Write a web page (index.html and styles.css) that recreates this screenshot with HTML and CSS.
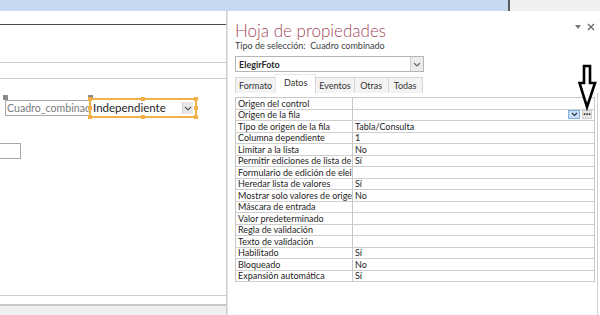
FILE: index.html
```html
<!DOCTYPE html>
<html lang="es">
<head>
<meta charset="utf-8">
<title>Hoja de propiedades</title>
<link rel="stylesheet" href="styles.css">
</head>
<body>
<div class="app">
  <div class="topbar">
    <div class="topbar-blue"></div>
    <div class="topbar-sep"></div>
    <div class="topbar-gray"></div>
  </div>
  <div class="main">
    <div class="left">
      <div class="band band-head"></div>
      <div class="band band-a"></div>
      <div class="band band-b"></div>
      <div class="canvas">
        <div class="handle handle-gray h-g1"></div>
        <div class="handle handle-gray h-g2"></div>
        <div class="ctl-label">Cuadro_combinad</div>
        <div class="ctl-combo">
          <span class="ctl-combo-text">Independiente</span>
          <span class="ctl-combo-btn"><svg width="8" height="5" viewBox="0 0 8 5"><polyline points="1,1 4,4 7,1" fill="none" stroke="#555" stroke-width="1.1"/></svg></span>
          <span class="handle handle-or ho-tl"></span>
          <span class="handle handle-or ho-tm"></span>
          <span class="handle handle-or ho-tr"></span>
          <span class="handle handle-or ho-ml"></span>
          <span class="handle handle-or ho-mr"></span>
          <span class="handle handle-or ho-bl"></span>
          <span class="handle handle-or ho-bm"></span>
          <span class="handle handle-or ho-br"></span>
        </div>
        <div class="ctl-box"></div>
      </div>
      <div class="foot"></div>
    </div>
    <div class="panel">
      <div class="panel-head">
        <div class="title">Hoja de propiedades</div>
        <div class="panel-tools">
          <svg width="6" height="4" viewBox="0 0 6 4"><polygon points="0,0 6,0 3,4" fill="#777"/></svg>
          <svg width="8" height="8" viewBox="0 0 8 8"><path d="M1 1 L7 7 M7 1 L1 7" stroke="#666" stroke-width="1.3"/></svg>
        </div>
      </div>
      <div class="subtitle">Tipo de selección:&nbsp; Cuadro combinado</div>
      <div class="select">
        <span class="select-text">ElegirFoto</span>
        <span class="select-btn"><svg width="8" height="5" viewBox="0 0 8 5"><polyline points="1,1 4,4 7,1" fill="none" stroke="#666" stroke-width="1.1"/></svg></span>
      </div>
      <div class="tabs">
        <div class="tab">Formato</div>
        <div class="tab tab-active">Datos</div>
        <div class="tab">Eventos</div>
        <div class="tab">Otras</div>
        <div class="tab">Todas</div>
      </div>
      <div class="sheet">
        <div class="props">
          <div class="pl">Origen del control</div><div class="pv"></div>
          <div class="pl">Origen de la fila</div><div class="pv pv-tools"><span class="mini-drop"><svg width="7" height="5" viewBox="0 0 7 5"><polyline points="1,1 3.5,3.5 6,1" fill="none" stroke="#234" stroke-width="1.1"/></svg></span><span class="mini-dots">···</span></div>
          <div class="pl">Tipo de origen de la fila</div><div class="pv">Tabla/Consulta</div>
          <div class="pl">Columna dependiente</div><div class="pv">1</div>
          <div class="pl">Limitar a la lista</div><div class="pv">No</div>
          <div class="pl">Permitir ediciones de lista de</div><div class="pv">Sí</div>
          <div class="pl">Formulario de edición de elei</div><div class="pv"></div>
          <div class="pl">Heredar lista de valores</div><div class="pv">Sí</div>
          <div class="pl">Mostrar solo valores de orige</div><div class="pv">No</div>
          <div class="pl">Máscara de entrada</div><div class="pv"></div>
          <div class="pl">Valor predeterminado</div><div class="pv"></div>
          <div class="pl">Regla de validación</div><div class="pv"></div>
          <div class="pl">Texto de validación</div><div class="pv"></div>
          <div class="pl">Habilitado</div><div class="pv">Sí</div>
          <div class="pl">Bloqueado</div><div class="pv">No</div>
          <div class="pl">Expansión automática</div><div class="pv">Sí</div>
        </div>
      </div>
    </div>
  </div>
  <svg class="arrow" width="20" height="50" viewBox="0 0 20 50"><path d="M6 3 H12 V20 H17 L9 44 L1.5 20 H6 Z" fill="#fff" stroke="#000" stroke-width="2.6" stroke-linejoin="miter"/></svg>
</div>
</body>
</html>
```

FILE: styles.css
```css
* { box-sizing: border-box; }
html, body { margin: 0; padding: 0; }
body {
  width: 600px;
  height: 315px;
  overflow: hidden;
  background: #fff;
  font-family: Lato, "Open Sans", sans-serif;
  color: #222;
}
.app { position: relative; width: 600px; height: 315px; display: flex; flex-direction: column; }

.topbar { height: 11px; display: flex; }
.topbar-blue { flex: 1; background: #c6d9f0; }
.topbar-sep { width: 2px; background: #5a5a5a; }
.topbar-gray { width: 90px; background: #efefef; }

.main { flex: 1; display: flex; min-height: 0; }

/* left design pane */
.left {
  width: 227px;
  border-right: 1px solid #cfcfcf;
  display: flex;
  flex-direction: column;
}
.band-head { height: 14px; border-bottom: 1px solid #4a4a4a; }
.band-a { height: 38px; border-bottom: 1px solid #cdcdcd; }
.band-b { height: 16px; border-bottom: 1px solid #cdcdcd; }
.canvas { flex: 1; position: relative; }
.foot {
  height: 20px;
  border-top: 1px solid #cfcfcf;
  background: linear-gradient(#fff 0 8px, #c8c8c8 8px 10px, #efefef 10px);
}

.ctl-label {
  position: absolute;
  left: 5px; top: 21px;
  width: 86px; height: 16px;
  border: 1px solid #a8a8a8;
  font-size: 10.6px;
  line-height: 14px;
  color: #7a7a7a;
  padding-left: 1px;
  overflow: hidden;
  white-space: nowrap;
}
.ctl-combo {
  position: absolute;
  left: 89px; top: 19px;
  width: 108px; height: 20px;
  border: 2px solid #f2b04a;
  display: flex;
  align-items: center;
  justify-content: space-between;
  padding: 0 2px 0 2px;
}
.ctl-combo-text { font-size: 11.5px; color: #1e1e1e; line-height: 14px; }
.ctl-combo-btn {
  width: 11px; height: 12px;
  background: #e6e6e6;
  border-left: 1px solid #d0d0d0;
  display: flex; align-items: center; justify-content: center;
}
.handle { position: absolute; width: 5px; height: 5px; }
.handle-gray { background: #8a8a8a; }
.h-g1 { left: 3px; top: 16px; }
.h-g2 { left: 88px; top: 16px; }
.handle-or { background: #f2b04a; width: 4px; height: 4px; }
.ho-tl { left: -3px; top: -3px; }
.ho-tm { left: 50px; top: -3px; }
.ho-tr { right: -3px; top: -3px; }
.ho-ml { left: -3px; top: 6px; }
.ho-mr { right: -3px; top: 6px; }
.ho-bl { left: -3px; bottom: -3px; }
.ho-bm { left: 50px; bottom: -3px; }
.ho-br { right: -3px; bottom: -3px; }
.ctl-box {
  position: absolute;
  left: -2px; top: 64px;
  width: 23px; height: 16px;
  border: 1px solid #a8a8a8;
}

/* property sheet panel */
.panel {
  flex: 1;
  display: flex;
  flex-direction: column;
  padding: 0 2px 0 7px;
  border-left: 1px solid #e2e2e2;
}
.panel-head { display: flex; justify-content: space-between; align-items: flex-start; margin-top: 9px; }
.title {
  font-size: 17px;
  line-height: 22px;
  font-weight: 300;
  color: #a3495a;
}
.panel-tools { display: flex; align-items: center; gap: 6px; margin-top: 3px; margin-right: 3px; }
.subtitle {
  font-size: 9px;
  line-height: 11px;
  color: #404040;
  margin-top: -2px;
}
.select {
  margin-top: 5px;
  width: 189px;
  height: 16px;
  border: 1px solid #b5b5b5;
  display: flex;
  align-items: center;
  justify-content: space-between;
}
.select-text { font-size: 9px; font-weight: 700; color: #2a2a2a; padding-left: 3px; }
.select-btn {
  width: 13px; height: 14px;
  background: #ececec;
  border-left: 1px solid #d0d0d0;
  display: flex; align-items: center; justify-content: center;
}
.tabs { display: flex; align-items: flex-end; height: 21px; }
.tab {
  height: 16px;
  min-width: 35px;
  padding: 0 3px;
  text-align: center;
  font-size: 9px;
  line-height: 15px;
  color: #333;
  background: #f3f3f3;
  border: 1px solid #d6d6d6;
  border-bottom: none;
  margin-right: -1px;
}
.tab-active {
  height: 19px;
  min-width: 41px;
  background: #fff;
  border-color: #e6e6e6;
  line-height: 16px;
}
.sheet {
  flex: 1;
  border-right: 1px solid #cfcfcf;
  padding: 4px 2px 0 0;
}
.props {
  display: grid;
  grid-template-columns: 117px 1fr;
  grid-auto-rows: 11.5px;
  border: 1px solid #c8c8c8;
  border-bottom: none;
}
.pl, .pv {
  font-size: 9px;
  line-height: 10.5px;
  padding-top: 0.5px;
  white-space: nowrap;
  overflow: hidden;
  border-bottom: 1px solid #cfcfcf;
  color: #1e1e1e;
  padding-left: 2px;
}
.pl { border-right: 1px solid #c8c8c8; }
.pv-tools { display: flex; justify-content: flex-end; align-items: center; gap: 2px; padding: 0 2px 0 0; }
.mini-drop {
  width: 12px; height: 9px;
  background: #c8def3;
  border: 1px solid #7fb0e0;
  display: flex; align-items: center; justify-content: center;
}
.mini-dots {
  width: 10px; height: 9px;
  background: #e6e6e6;
  border: 1px solid #cfcfcf;
  font-size: 9px;
  line-height: 6px;
  text-align: center;
  font-weight: 700;
  color: #222;
}
.arrow { position: absolute; left: 578px; top: 63px; }
```
